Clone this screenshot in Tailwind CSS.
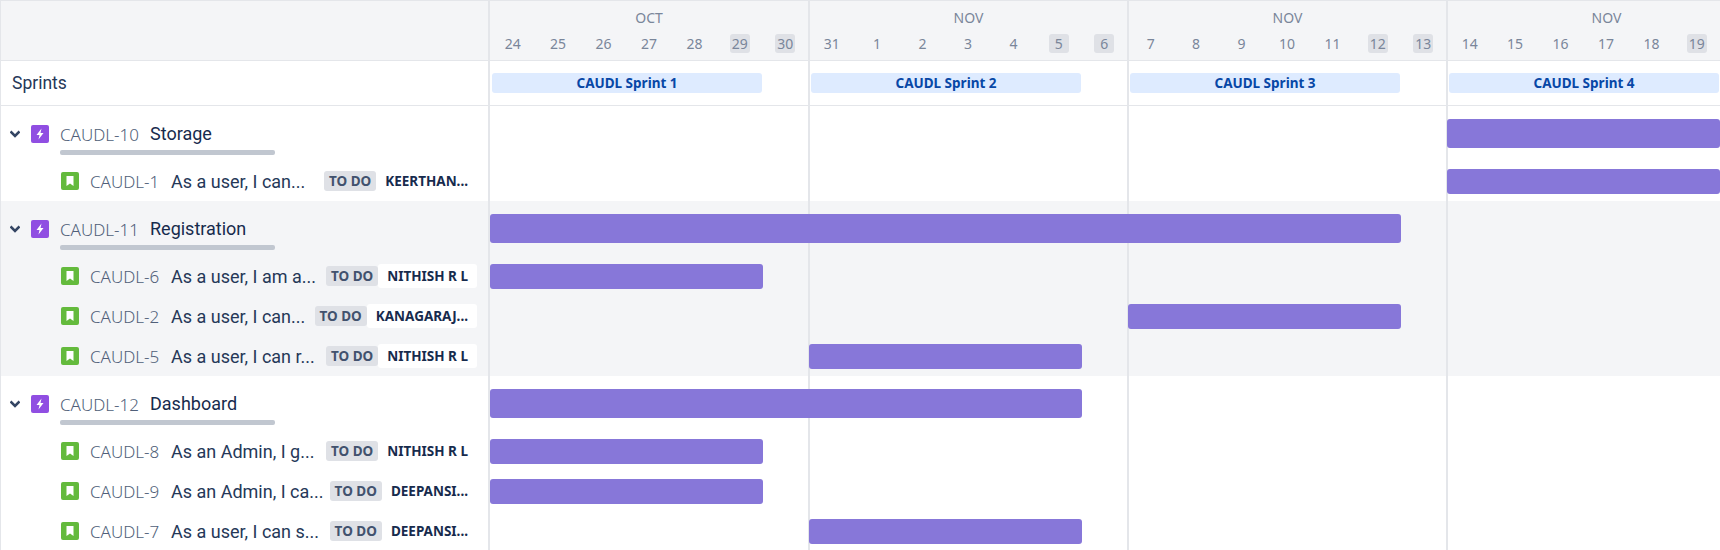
<!DOCTYPE html>
<html lang="en">
<head>
    <meta charset="UTF-8">
    <title>Roadmap</title>
    <script src="https://cdn.jsdelivr.net/npm/@tailwindcss/browser@4"></script>
</head>
<body class="bg-white">
    <div class="w-[1720px] h-[550px] overflow-hidden font-['Roboto',sans-serif] text-[#172B4D]">
        <!-- Month / day header -->
        <div class="flex h-[61px] bg-[#F4F5F7] border-t border-b border-l border-[#E4E6EA]">
            <div class="w-[487px] shrink-0"></div>
            <div id="months" class="flex"></div>
        </div>

        <!-- Sprints -->
        <div class="flex h-[45px] border-b border-l border-[#E4E6EA]">
            <div class="w-[487px] shrink-0 pl-[11px] flex items-center text-[17.5px] text-[#253858]">Sprints</div>
            <div id="sprints" class="flex"></div>
        </div>

        <!-- Rows -->
        <div id="rows" class="relative border-l border-[#E4E6EA]">
            <div class="absolute top-0 bottom-0 left-[487px] w-[2px] bg-[#E4E6EA] z-10"></div>
            <div class="absolute top-0 bottom-0 left-[807px] w-[2px] bg-[#E4E6EA] z-10"></div>
            <div class="absolute top-0 bottom-0 left-[1126px] w-[2px] bg-[#E4E6EA] z-10"></div>
            <div class="absolute top-0 bottom-0 left-[1445px] w-[2px] bg-[#E4E6EA] z-10"></div>
        </div>
    </div>

    <script>
        // The 7th day of the last block runs past the window, so its cell stays empty
        const months = [
            { name: 'OCT', days: ['24','25','26','27','28','29','30'], off: ['29','30'] },
            { name: 'NOV', days: ['31','1','2','3','4','5','6'], off: ['5','6'] },
            { name: 'NOV', days: ['7','8','9','10','11','12','13'], off: ['12','13'] },
            { name: 'NOV', days: ['14','15','16','17','18','19',''], off: ['19'] }
        ];

        document.getElementById('months').innerHTML = months.map((m, i) => `
            <div class="${i === 0 ? 'w-[320px]' : 'w-[319px]'} shrink-0 border-l-2 border-[#E4E6EA] pt-[4px] font-['Noto_Sans',sans-serif] text-[#7A869A]">
                <div class="h-[24px] flex items-center justify-center text-[14px]">${m.name}</div>
                <div class="flex mt-[5px] ${i === 0 ? '' : '-ml-[1px]'}">
                    ${m.days.map(d => `
                        <div class="flex-1 flex justify-center">
                            <span class="w-[20px] h-[19px] flex items-center justify-center rounded-[3px] text-[14px] ${m.off.includes(d) ? 'bg-[#DFE1E6]' : ''}">${d}</span>
                        </div>`).join('')}
                </div>
            </div>`).join('');

        document.getElementById('sprints').innerHTML = [1, 2, 3, 4].map(n => `
            <div class="${n === 1 ? 'w-[320px] pl-[2px]' : 'w-[319px] pl-[1px]'} shrink-0 border-l-2 border-[#E4E6EA] pt-[12px]">
                <div class="w-[270px] h-[20px] flex items-center justify-center rounded-[3px] bg-[#DEEBFF] text-[#0747A6] text-[13.5px] font-bold font-['Noto_Sans',sans-serif]">CAUDL Sprint ${n}</div>
            </div>`).join('');

        // x is measured from the start of the timeline cell
        const groups = [
            { key: 'CAUDL-10', title: 'Storage', x: 959, w: 273, shade: false, stories: [
                { key: 'CAUDL-1', title: 'As a user, I can...', who: 'KEERTHAN...', x: 959, w: 273 }
            ]},
            { key: 'CAUDL-11', title: 'Registration', x: 2, w: 911, shade: true, stories: [
                { key: 'CAUDL-6', title: 'As a user, I am a...', who: 'NITHISH R L', x: 2, w: 273 },
                { key: 'CAUDL-2', title: 'As a user, I can...', who: 'KANAGARAJ...', x: 640, w: 273 },
                { key: 'CAUDL-5', title: 'As a user, I can r...', who: 'NITHISH R L', x: 321, w: 273 }
            ]},
            { key: 'CAUDL-12', title: 'Dashboard', x: 2, w: 592, shade: false, stories: [
                { key: 'CAUDL-8', title: 'As an Admin, I g...', who: 'NITHISH R L', x: 2, w: 273 },
                { key: 'CAUDL-9', title: 'As an Admin, I ca...', who: 'DEEPANSI...', x: 2, w: 273 },
                { key: 'CAUDL-7', title: 'As a user, I can s...', who: 'DEEPANSI...', x: 321, w: 273 }
            ]}
        ];

        const epicIcon = `
            <svg class="w-[18px] h-[18px] shrink-0" viewBox="0 0 18 18">
                <rect width="18" height="18" rx="2" fill="#904EE2"/>
                <path d="M10.5 3.5 L5.5 10 H8.5 L7.5 14.5 L12.5 8 H9.5 Z" fill="#fff"/>
            </svg>`;
        const storyIcon = `
            <svg class="w-[18px] h-[18px] shrink-0" viewBox="0 0 18 18">
                <rect width="18" height="18" rx="2" fill="#63BA3C"/>
                <path d="M5.5 4 H12.5 V14 L9 11.4 L5.5 14 Z" fill="#fff"/>
            </svg>`;

        const rows = document.getElementById('rows');
        groups.forEach(g => {
            const wrap = document.createElement('div');
            wrap.className = g.shade ? 'bg-[#F4F5F7]' : 'bg-white';
            wrap.innerHTML = `
                <div class="flex h-[55px]">
                    <div class="w-[487px] shrink-0 flex items-start pl-[9px] pt-[19px]">
                        <svg class="w-[10px] h-[18px] shrink-0" viewBox="0 0 10 18"><path d="M0.5 6.5 L5 11 L9.5 6.5" fill="none" stroke="#344563" stroke-width="2.6"/></svg>
                        <div class="ml-[11px]">${epicIcon}</div>
                        <div class="ml-[11px] w-[215px]">
                            <div class="flex items-center h-[18px] whitespace-nowrap">
                                <span class="w-[90px] mt-[2px] font-['Noto_Sans',sans-serif] font-light text-[#505F79] text-[17px]">${g.key}</span>
                                <span class="text-[18px] -mt-[2px]">${g.title}</span>
                            </div>
                            <div class="h-[5px] mt-[7px] rounded-[2px] bg-[#C1C7D0]"></div>
                        </div>
                    </div>
                    <div class="flex-1 pt-[13px]">
                        <div class="relative z-20 h-[29px] rounded-[3px] bg-[#8777D9]" style="margin-left: ${g.x}px; width: ${g.w}px"></div>
                    </div>
                </div>
                ${g.stories.map(s => `
                <div class="flex h-[40px]">
                    <div class="w-[487px] shrink-0 flex items-center pl-[60px] pr-[11px] whitespace-nowrap">
                        ${storyIcon}
                        <span class="ml-[11px] w-[81px] mt-[2px] font-['Noto_Sans',sans-serif] font-light text-[#505F79] text-[17px]">${s.key}</span>
                        <span class="text-[18px] text-[#253858]">${s.title}</span>
                        <span class="ml-auto h-[20px] px-[5px] flex items-center rounded-[3px] bg-[#DFE1E6] text-[#42526E] text-[13.5px] font-bold font-['Noto_Sans',sans-serif]">TO DO</span>
                        <span class="h-[24px] px-[9px] flex items-center rounded-[3px] ${g.shade ? 'bg-white' : ''} text-[13.5px] font-bold font-['Noto_Sans',sans-serif]">${s.who}</span>
                    </div>
                    <div class="flex-1 pt-[8px]">
                        <div class="relative z-20 h-[25px] rounded-[3px] bg-[#8777D9]" style="margin-left: ${s.x}px; width: ${s.w}px"></div>
                    </div>
                </div>`).join('')}`;
            rows.appendChild(wrap);
        });
    </script>
</body>
</html>
